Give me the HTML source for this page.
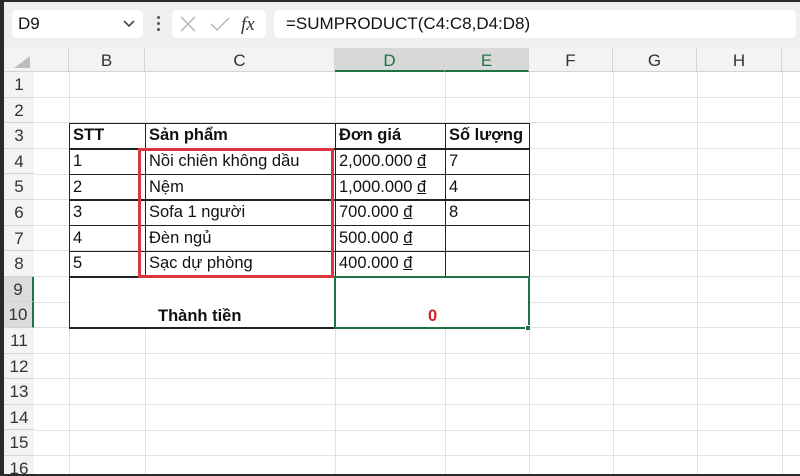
<!DOCTYPE html>
<html style="width:800px;height:476px;overflow:hidden"><head><meta charset="utf-8"><style>
*{margin:0;padding:0;box-sizing:border-box}
body{width:800px;height:476px;overflow:hidden;background:#fff;position:relative;font-family:"Liberation Sans",sans-serif;color:#111}
.a{position:absolute}
.gl{position:absolute;height:1px;background:#e1e1e1;left:34px;width:766px}
.vl{position:absolute;width:1px;height:404px;background:#e1e1e1}
.ch{position:absolute;top:48px;height:24px;text-align:center;font-size:17px;line-height:26px;color:#333;border-right:1px solid #d4d4d4}
.rh{position:absolute;left:4px;width:30px;height:25.6px;text-align:center;font-size:17px;line-height:26px;color:#333;border-bottom:1px solid #d4d4d4;background:#f3f3f3}
.t{position:absolute;font-size:16.5px;line-height:25px;padding-left:3px;white-space:nowrap}
.hl{position:absolute;height:1.5px;background:#222}
.vb{position:absolute;width:1.5px;background:#222}
u{text-decoration:underline}
</style></head><body>
<div class="a" style="left:0;top:0;width:800px;height:48px;background:#efefef"></div>
<div class="a" style="left:0;top:0;width:800px;height:2px;background:#2a2a2a"></div>
<div class="a" style="left:12px;top:10px;width:131px;height:28px;background:#fff;border-radius:5px;font-size:17px;line-height:28px;padding-left:6px">D9</div>
<svg class="a" style="left:122px;top:19px" width="14" height="10"><path d="M2 2 L7 7 L12 2" stroke="#444" stroke-width="1.6" fill="none"/></svg>
<div class="a" style="left:157px;top:16px;width:3px;height:3px;background:#555;border-radius:2px"></div>
<div class="a" style="left:157px;top:22px;width:3px;height:3px;background:#555;border-radius:2px"></div>
<div class="a" style="left:157px;top:28px;width:3px;height:3px;background:#555;border-radius:2px"></div>
<div class="a" style="left:172px;top:10px;width:94px;height:28px;background:#fff;border-radius:5px"></div>
<svg class="a" style="left:178px;top:14px" width="90" height="22"><path d="M3 3 L17 17 M17 3 L3 17" stroke="#b8b8b8" stroke-width="1.5"/><path d="M33 10 L39 16 L51 4" stroke="#b8b8b8" stroke-width="1.5" fill="none"/><text x="63" y="16" font-family="Liberation Serif" font-style="italic" font-size="19" fill="#333">fx</text></svg>
<div class="a" style="left:274px;top:10px;width:522px;height:28px;background:#fff;border-radius:5px;font-size:17px;line-height:28px;padding-left:12px">=SUMPRODUCT(C4:C8,D4:D8)</div>
<div class="a" style="left:4px;top:48px;width:796px;height:24px;background:#f3f3f3;border-bottom:1px solid #d4d4d4"></div>
<svg class="a" style="left:12px;top:54px" width="20" height="16"><path d="M2 14 L18 14 L18 2 Z" fill="#bdbdbd"/></svg>
<div class="ch" style="left:34px;width:35px"></div>
<div class="ch" style="left:69px;width:76px">B</div>
<div class="ch" style="left:145px;width:190px">C</div>
<div class="ch" style="left:335px;width:110px;background:#d8d8d8;border-bottom:2px solid #217346;color:#217346">D</div>
<div class="ch" style="left:445px;width:84px;background:#d8d8d8;border-bottom:2px solid #217346;color:#217346">E</div>
<div class="ch" style="left:529px;width:84px">F</div>
<div class="ch" style="left:613px;width:84px">G</div>
<div class="ch" style="left:697px;width:85px">H</div>
<div class="gl" style="top:97px"></div><div class="gl" style="top:122px"></div><div class="gl" style="top:148px"></div><div class="gl" style="top:174px"></div><div class="gl" style="top:199px"></div><div class="gl" style="top:225px"></div><div class="gl" style="top:250px"></div><div class="gl" style="top:276px"></div>
<div class="gl" style="top:302px;left:34px;width:35px"></div><div class="gl" style="top:302px;left:529px;width:271px"></div>
<div class="gl" style="top:327px"></div><div class="gl" style="top:353px"></div><div class="gl" style="top:378px"></div><div class="gl" style="top:404px"></div><div class="gl" style="top:430px"></div><div class="gl" style="top:455px"></div>
<div class="vl" style="left:69px;top:72px"></div><div class="vl" style="left:145px;top:72px"></div><div class="vl" style="left:335px;top:72px"></div><div class="vl" style="left:445px;top:72px"></div><div class="vl" style="left:529px;top:72px"></div><div class="vl" style="left:613px;top:72px"></div><div class="vl" style="left:697px;top:72px"></div><div class="vl" style="left:782px;top:72px"></div>
<div class="a" style="left:70px;top:277px;width:458px;height:50px;background:#fff"></div>
<div class="rh" style="top:72px">1</div><div class="rh" style="top:97.6px">2</div><div class="rh" style="top:123.2px">3</div><div class="rh" style="top:148.8px">4</div><div class="rh" style="top:174.4px">5</div><div class="rh" style="top:200px">6</div><div class="rh" style="top:225.6px">7</div><div class="rh" style="top:251.2px">8</div>
<div class="rh" style="top:276.8px;background:#dcdcdc;border-right:2px solid #217346">9</div><div class="rh" style="top:302.4px;background:#dcdcdc;border-right:2px solid #217346">10</div>
<div class="rh" style="top:328px">11</div><div class="rh" style="top:353.6px">12</div><div class="rh" style="top:379.2px">13</div><div class="rh" style="top:404.8px">14</div><div class="rh" style="top:430.4px">15</div><div class="rh" style="top:456px">16</div>
<div class="a" style="left:0;top:0;width:4px;height:476px;background:#2a2a2a"></div>
<div class="a" style="left:0;top:474px;width:800px;height:2px;background:#2a2a2a"></div>
<div class="hl" style="left:69px;top:122.5px;width:461px"></div>
<div class="hl" style="left:69px;top:148px;width:461px"></div>
<div class="hl" style="left:69px;top:173.7px;width:461px"></div>
<div class="hl" style="left:69px;top:199.3px;width:461px"></div>
<div class="hl" style="left:69px;top:224.9px;width:461px"></div>
<div class="hl" style="left:69px;top:250.5px;width:461px"></div>
<div class="hl" style="left:69px;top:276.1px;width:461px"></div>
<div class="hl" style="left:69px;top:327.3px;width:461px"></div>
<div class="vb" style="left:68.5px;top:122.5px;height:206px"></div>
<div class="vb" style="left:144.5px;top:122.5px;height:154px"></div>
<div class="vb" style="left:334.5px;top:122.5px;height:206px"></div>
<div class="vb" style="left:444.5px;top:122.5px;height:154px"></div>
<div class="vb" style="left:528.5px;top:122.5px;height:206px"></div>
<div class="t" style="left:70px;top:123px;font-weight:bold">STT</div>
<div class="t" style="left:146px;top:123px;font-weight:bold">Sản phẩm</div>
<div class="t" style="left:336px;top:123px;font-weight:bold">Đơn giá</div>
<div class="t" style="left:446px;top:123px;font-weight:bold">Số lượng</div>
<div class="t" style="left:70px;top:149px">1</div><div class="t" style="left:146px;top:149px">Nồi chiên không dầu</div><div class="t" style="left:336px;top:149px">2,000.000 <u>đ</u></div><div class="t" style="left:446px;top:149px">7</div>
<div class="t" style="left:70px;top:174.6px">2</div><div class="t" style="left:146px;top:174.6px">Nệm</div><div class="t" style="left:336px;top:174.6px">1,000.000 <u>đ</u></div><div class="t" style="left:446px;top:174.6px">4</div>
<div class="t" style="left:70px;top:200.2px">3</div><div class="t" style="left:146px;top:200.2px">Sofa 1 người</div><div class="t" style="left:336px;top:200.2px">700.000 <u>đ</u></div><div class="t" style="left:446px;top:200.2px">8</div>
<div class="t" style="left:70px;top:225.8px">4</div><div class="t" style="left:146px;top:225.8px">Đèn ngủ</div><div class="t" style="left:336px;top:225.8px">500.000 <u>đ</u></div>
<div class="t" style="left:70px;top:251.4px">5</div><div class="t" style="left:146px;top:251.4px">Sạc dự phòng</div><div class="t" style="left:336px;top:251.4px">400.000 <u>đ</u></div>
<div class="t" style="left:155px;top:304px;font-weight:bold">Thành tiền</div>
<div class="t" style="left:425px;top:304px;font-weight:bold;color:#d0202a">0</div>
<div class="a" style="left:138px;top:148px;width:196px;height:130px;border:3px solid #d9363e"></div>
<div class="a" style="left:334px;top:276px;width:196px;height:53px;border:2px solid #217346"></div>
<div class="a" style="left:525px;top:325px;width:6px;height:6px;background:#217346;border:1px solid #fff"></div>
</body></html>
